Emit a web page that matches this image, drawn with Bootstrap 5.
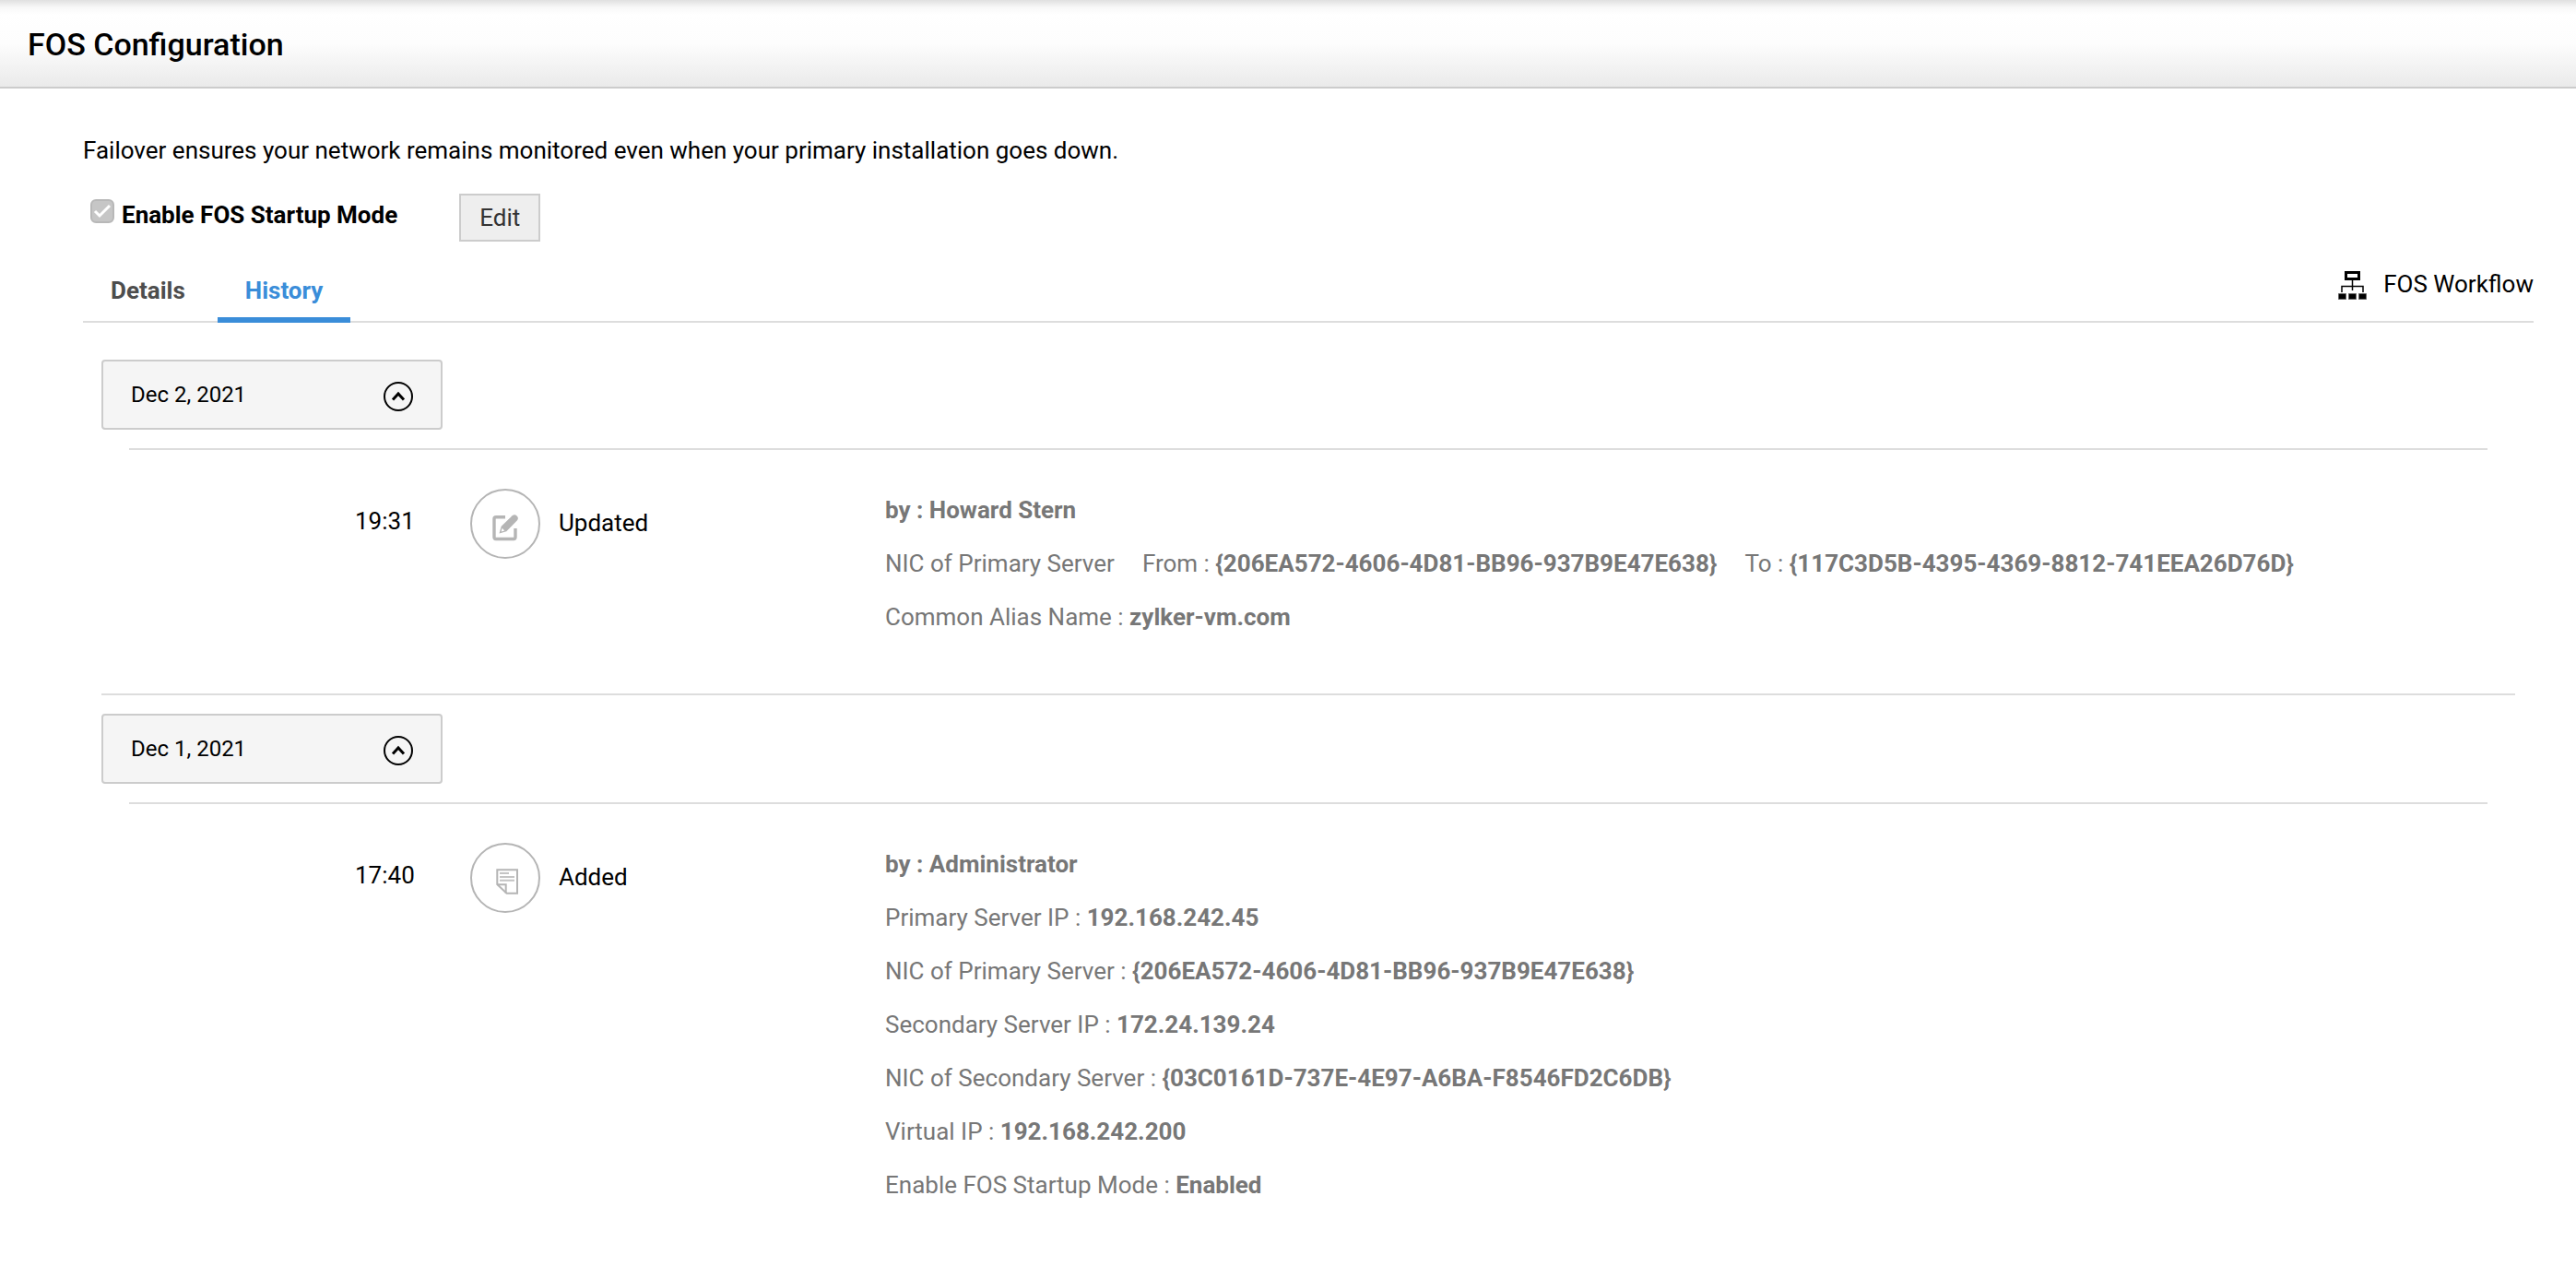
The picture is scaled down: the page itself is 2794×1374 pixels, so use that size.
<!DOCTYPE html>
<html lang="en">
<head>
<meta charset="utf-8">
<meta name="viewport" content="width=device-width, initial-scale=1">
<title>FOS Configuration</title>
<link href="https://cdn.jsdelivr.net/npm/bootstrap@5.3.0/dist/css/bootstrap.min.css" rel="stylesheet">
<style>
body { font-family: Roboto, sans-serif; font-size: 26px; line-height: 30px; color: #000; background: #fff; }
.page-head { padding: 28px 30px 26px; border-bottom: 2px solid #ccc; background: linear-gradient(#e0e0e0 0, #f8f8f8 8px, #fff 16px, #fdfdfd 50%, #eaeaea 100%); }
.page-title { font-size: 34px; line-height: 40px; font-weight: 500; }
.page-body { padding: 52px 46px 48px 90px; }
.startup-row { margin-top: 32px; padding-left: 8px; }
.startup-box.form-check-input { width: 26px; height: 26px; margin: 6px 8px 0 0; border: 2px solid #b8b8b8; border-radius: 6px; background-color: #c6c6c6; opacity: 1; float: none; }
.startup-box.form-check-input:checked { background-image: url("data:image/svg+xml,%3Csvg xmlns='http://www.w3.org/2000/svg' viewBox='0 0 22 22'%3E%3Cpath d='M3 11l5 5L19 5' fill='none' stroke='%23fff' stroke-width='3'/%3E%3C/svg%3E"); background-size: 100%; }
.startup-label.startup-label { opacity: 1; margin: 8px 67px 0 0; font-weight: 700; }
.btn-edit { height: 52px; padding: 0 20px; border: 2px solid #ccc; border-radius: 0; background: #eee; color: #333; font-size: 26px; line-height: 44px; }
.tab-bar { border-bottom: 2px solid #ddd; height: 88px; }
.tab-list { gap: 5px; }
.tab-link { padding: 0 30px; height: 50px; margin-bottom: -2px; border-bottom: 6px solid transparent; color: #4d4d4d; font-weight: 700; text-decoration: none; }
.tab-link.active { color: #3a8dd9; border-bottom-color: #3a8dd9; }
.flow-link { color: #000; text-decoration: none; margin-bottom: 22px; gap: 17px; }
.flow-link svg { margin-top: 4px; }
.history { padding: 40px 20px 0; }
.day-btn { width: 370px; height: 76px; padding: 0 30px; border: 2px solid #ccc; border-radius: 4px; background: #f5f5f5; color: #000; font-size: 24px; }
.day-btn svg { margin-top: 4px; }
.day-body { margin: 20px 30px 0; border-top: 2px solid #ddd; padding: 42px 0 54px; }
.day + .day { border-top: 2px solid #ddd; padding-top: 20px; }
.entry-time { width: 370px; padding: 20px 0 0 245px; }
.entry-icon { width: 76px; height: 76px; }
.entry-kind { width: 374px; padding: 22px 0 0 20px; }
.entry-info { color: #777; line-height: 58px; margin-top: -6px; }
.entry-info .wide-gap { margin-right: 30px; }
</style>
</head>
<body>
<header class="page-head">
  <h1 class="page-title mb-0">FOS Configuration</h1>
</header>
<main class="page-body">
  <p class="mb-0">Failover ensures your network remains monitored even when your primary installation goes down.</p>
  <div class="startup-row d-flex align-items-start">
    <input class="form-check-input startup-box" type="checkbox" id="startup" checked disabled>
    <label class="startup-label" for="startup">Enable FOS Startup Mode</label>
    <button type="button" class="btn btn-edit">Edit</button>
  </div>
  <div class="tab-bar d-flex align-items-end justify-content-between">
    <nav class="tab-list d-flex" aria-label="Failover views">
      <a class="tab-link" href="#details">Details</a>
      <a class="tab-link active" href="#history" aria-current="page">History</a>
    </nav>
    <a class="flow-link d-flex align-items-center" href="#workflow">
      <svg width="32" height="32" viewBox="0 0 32 32" fill="none" aria-hidden="true"><path d="M8.500 1.500h14v7h-14z" stroke="#000" stroke-width="3"/><path d="M15.500 9v12M4 23v-6.500h23v6.500" stroke="#000" stroke-width="1.500"/><path d="M.5 24.500h8v6h-8zM11.500 24.500h8v6h-8zM22.500 24.500h8v6h-8z" fill="#000" stroke="#666"/></svg>
      <span>FOS Workflow</span>
    </a>
  </div>
  <div class="history" id="history">
    <section class="day">
      <button type="button" class="btn day-btn d-flex align-items-center justify-content-between" data-bs-toggle="collapse" data-bs-target="#day2" aria-expanded="true">Dec 2, 2021
        <svg width="32" height="32" viewBox="0 0 32 32" fill="none" stroke="#000" aria-hidden="true"><circle cx="16" cy="16" r="15" stroke-width="2"/><path d="M10 19.500l6-6.500 6 6.500" stroke-width="3"/></svg>
      </button>
      <div class="collapse show" id="day2">
        <div class="day-body d-flex align-items-start">
          <div class="entry-time">19:31</div>
          <svg class="entry-icon" viewBox="0 0 76 76" fill="none" stroke="#b5b5b5" aria-hidden="true"><circle cx="38" cy="38" r="37" stroke-width="2"/><path d="M38 30.700H28q-2 0-2 2V52.500q0 2 2 2H47q2 0 2-2V43" stroke-width="3.400"/><path d="M31.500 48.500l2.200-7.700L45.600 29.300q2.500-2.200 5 .2t.2 4.900L39.300 46.200z" fill="#b5b5b5" stroke="none"/><path d="M33.600 46.400l1-3.600 2.700 2.700z" fill="#fff" stroke="none"/></svg>
          <div class="entry-kind">Updated</div>
          <div class="entry-info">
            <div><b>by : Howard Stern</b></div>
            <div><span class="wide-gap">NIC of Primary Server</span><span class="wide-gap">From : <b>{206EA572-4606-4D81-BB96-937B9E47E638}</b></span><span>To : <b>{117C3D5B-4395-4369-8812-741EEA26D76D}</b></span></div>
            <div>Common Alias Name : <b>zylker-vm.com</b></div>
          </div>
        </div>
      </div>
    </section>
    <section class="day">
      <button type="button" class="btn day-btn d-flex align-items-center justify-content-between" data-bs-toggle="collapse" data-bs-target="#day1" aria-expanded="true">Dec 1, 2021
        <svg width="32" height="32" viewBox="0 0 32 32" fill="none" stroke="#000" aria-hidden="true"><circle cx="16" cy="16" r="15" stroke-width="2"/><path d="M10 19.500l6-6.500 6 6.500" stroke-width="3"/></svg>
      </button>
      <div class="collapse show" id="day1">
        <div class="day-body d-flex align-items-start">
          <div class="entry-time">17:40</div>
          <svg class="entry-icon" viewBox="0 0 76 76" fill="none" stroke="#b5b5b5" aria-hidden="true"><circle cx="38" cy="38" r="37" stroke-width="2"/><path d="M29.300 45V29.300H51V54.700H39.500z" stroke-width="2"/><path d="M29.300 45.300H38.700V54.700" stroke-width="2"/><path d="M32 33h10M32 37h16M32 40.800h16" stroke="#c4c4c4" stroke-width="2"/></svg>
          <div class="entry-kind">Added</div>
          <div class="entry-info">
            <div><b>by : Administrator</b></div>
            <div>Primary Server IP : <b>192.168.242.45</b></div>
            <div>NIC of Primary Server : <b>{206EA572-4606-4D81-BB96-937B9E47E638}</b></div>
            <div>Secondary Server IP : <b>172.24.139.24</b></div>
            <div>NIC of Secondary Server : <b>{03C0161D-737E-4E97-A6BA-F8546FD2C6DB}</b></div>
            <div>Virtual IP : <b>192.168.242.200</b></div>
            <div>Enable FOS Startup Mode : <b>Enabled</b></div>
          </div>
        </div>
      </div>
    </section>
  </div>
</main>
<script src="https://cdn.jsdelivr.net/npm/bootstrap@5.3.0/dist/js/bootstrap.bundle.min.js"></script>
</body>
</html>
